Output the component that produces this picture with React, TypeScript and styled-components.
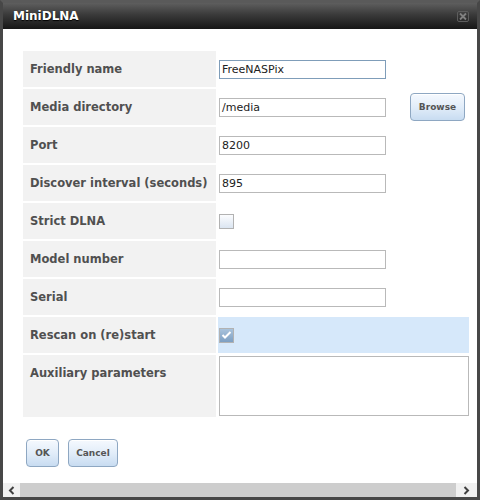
import React from 'react';
import styled, { createGlobalStyle } from 'styled-components';

const GlobalStyle = createGlobalStyle`
  html, body {
    margin: 0;
    padding: 0;
    background: #ffffff;
  }
`;

const Window = styled.div`
  box-sizing: border-box;
  width: 480px;
  height: 500px;
  display: flex;
  flex-direction: column;
  border: 3px solid #474747;
  border-top-color: #5a5a5a;
  font-family: 'DejaVu Sans', Verdana, sans-serif;
  background: #ffffff;
`;

const TitleBar = styled.div`
  height: 26px;
  flex: none;
  display: flex;
  align-items: center;
  justify-content: space-between;
  padding: 0 8px 0 10px;
  background: linear-gradient(to bottom, #5e5e5e 0%, #3a3a3a 45%, #161616 100%);
`;

const Title = styled.span`
  color: #ffffff;
  font-size: 12px;
  font-weight: bold;
  text-shadow: 0 1px 1px #000;
`;

const Body = styled.div`
  flex: 1;
  padding: 22px 0 0 20px;
  display: flex;
  flex-direction: column;
`;

const FormGrid = styled.div`
  display: grid;
  grid-template-columns: 193px 251px;
  grid-template-rows: repeat(8, 36px) 62px;
  gap: 2px;
`;

const LabelCell = styled.div`
  background: #f2f2f2;
  color: #505050;
  font-size: 11.5px;
  font-weight: bold;
  line-height: 14px;
  padding: 11px 0 0 7px;
  white-space: nowrap;
`;

const ValueCell = styled.div<{ $active?: boolean; $top?: boolean }>`
  display: flex;
  align-items: ${(p) => (p.$top ? 'flex-start' : 'center')};
  padding: ${(p) => (p.$top ? '1px 0 0 1px' : '0 0 0 1px')};
  background: ${(p) => (p.$active ? '#d6e8fa' : '#ffffff')};
`;

const TextInput = styled.div<{ $focus?: boolean }>`
  box-sizing: border-box;
  width: 167px;
  height: 19px;
  border: 1px solid ${(p) => (p.$focus ? '#7f9db9' : '#b9b9b9')};
  font-size: 11px;
  color: #222;
  line-height: 17px;
  padding-left: 2px;
  background: #fff;
`;

const TextArea = styled.div`
  box-sizing: border-box;
  width: 250px;
  height: 60px;
  border: 1px solid #b9b9b9;
  background: #fff;
`;

const Check = styled.div<{ $checked?: boolean }>`
  box-sizing: border-box;
  width: 15px;
  height: 15px;
  border: 1px solid #b2b2b2;
  display: flex;
  align-items: center;
  justify-content: center;
  background: ${(p) =>
    p.$checked
      ? 'linear-gradient(to bottom, #a9c3dc, #7d9fc2)'
      : 'linear-gradient(to bottom, #fbfcfe, #dbe5f1)'};
`;

const Button = styled.div<{ $w: number }>`
  box-sizing: border-box;
  width: ${(p) => p.$w}px;
  height: 28px;
  border: 1px solid #8ea7c2;
  border-radius: 4px;
  background: linear-gradient(to bottom, #f5f9fe 0%, #e2edf9 50%, #c8dcf1 100%);
  box-shadow: inset 0 1px 0 #fff;
  color: #555;
  font-size: 9px;
  font-weight: bold;
  display: flex;
  align-items: center;
  justify-content: center;
`;

const BrowseWrap = styled.div`
  margin-left: 24px;
`;

const ButtonRow = styled.div`
  display: flex;
  gap: 9px;
  margin: 22px 0 0 3px;
`;

const ScrollBar = styled.div`
  height: 14px;
  flex: none;
  display: flex;
  background: #cdcdcd;
`;

const ScrollButton = styled.div<{ $w: number }>`
  width: ${(p) => p.$w}px;
  background: #f0f0f0;
  display: flex;
  align-items: center;
  justify-content: center;
`;

const Track = styled.div`
  flex: 1;
`;

const CloseIcon = () => (
  <svg width="12" height="11" viewBox="0 0 12 11">
    <rect x="0.5" y="0.5" width="11" height="10" rx="1.5" fill="none" stroke="#5d5d5d" />
    <path d="M3 2.5 L9 8.5 M9 2.5 L3 8.5" stroke="#808080" strokeWidth="1.8" />
  </svg>
);

const Chevron = ({ dir }: { dir: 'left' | 'right' }) => (
  <svg width="7" height="9" viewBox="0 0 7 9">
    <path
      d={dir === 'left' ? 'M5.5 1 L2 4.5 L5.5 8' : 'M1.5 1 L5 4.5 L1.5 8'}
      fill="none"
      stroke="#404040"
      strokeWidth="2"
    />
  </svg>
);

const CheckMark = () => (
  <svg width="11" height="10" viewBox="0 0 11 10">
    <path d="M1.5 5 L4 7.5 L9.5 2" fill="none" stroke="#ffffff" strokeWidth="2" />
  </svg>
);

const App: React.FC = () => {
  return (
    <>
      <GlobalStyle />
      <Window>
        <TitleBar>
          <Title>MiniDLNA</Title>
          <CloseIcon />
        </TitleBar>
        <Body>
          <FormGrid>
            <LabelCell>Friendly name</LabelCell>
            <ValueCell>
              <TextInput $focus>FreeNASPix</TextInput>
            </ValueCell>

            <LabelCell>Media directory</LabelCell>
            <ValueCell>
              <TextInput>/media</TextInput>
              <BrowseWrap>
                <Button $w={55}>Browse</Button>
              </BrowseWrap>
            </ValueCell>

            <LabelCell>Port</LabelCell>
            <ValueCell>
              <TextInput>8200</TextInput>
            </ValueCell>

            <LabelCell>Discover interval (seconds)</LabelCell>
            <ValueCell>
              <TextInput>895</TextInput>
            </ValueCell>

            <LabelCell>Strict DLNA</LabelCell>
            <ValueCell>
              <Check />
            </ValueCell>

            <LabelCell>Model number</LabelCell>
            <ValueCell>
              <TextInput />
            </ValueCell>

            <LabelCell>Serial</LabelCell>
            <ValueCell>
              <TextInput />
            </ValueCell>

            <LabelCell>Rescan on (re)start</LabelCell>
            <ValueCell $active>
              <Check $checked>
                <CheckMark />
              </Check>
            </ValueCell>

            <LabelCell>Auxiliary parameters</LabelCell>
            <ValueCell $top>
              <TextArea />
            </ValueCell>
          </FormGrid>
          <ButtonRow>
            <Button $w={33}>OK</Button>
            <Button $w={50}>Cancel</Button>
          </ButtonRow>
        </Body>
        <ScrollBar>
          <ScrollButton $w={17}>
            <Chevron dir="left" />
          </ScrollButton>
          <Track />
          <ScrollButton $w={21}>
            <Chevron dir="right" />
          </ScrollButton>
        </ScrollBar>
      </Window>
    </>
  );
};

export default App;
